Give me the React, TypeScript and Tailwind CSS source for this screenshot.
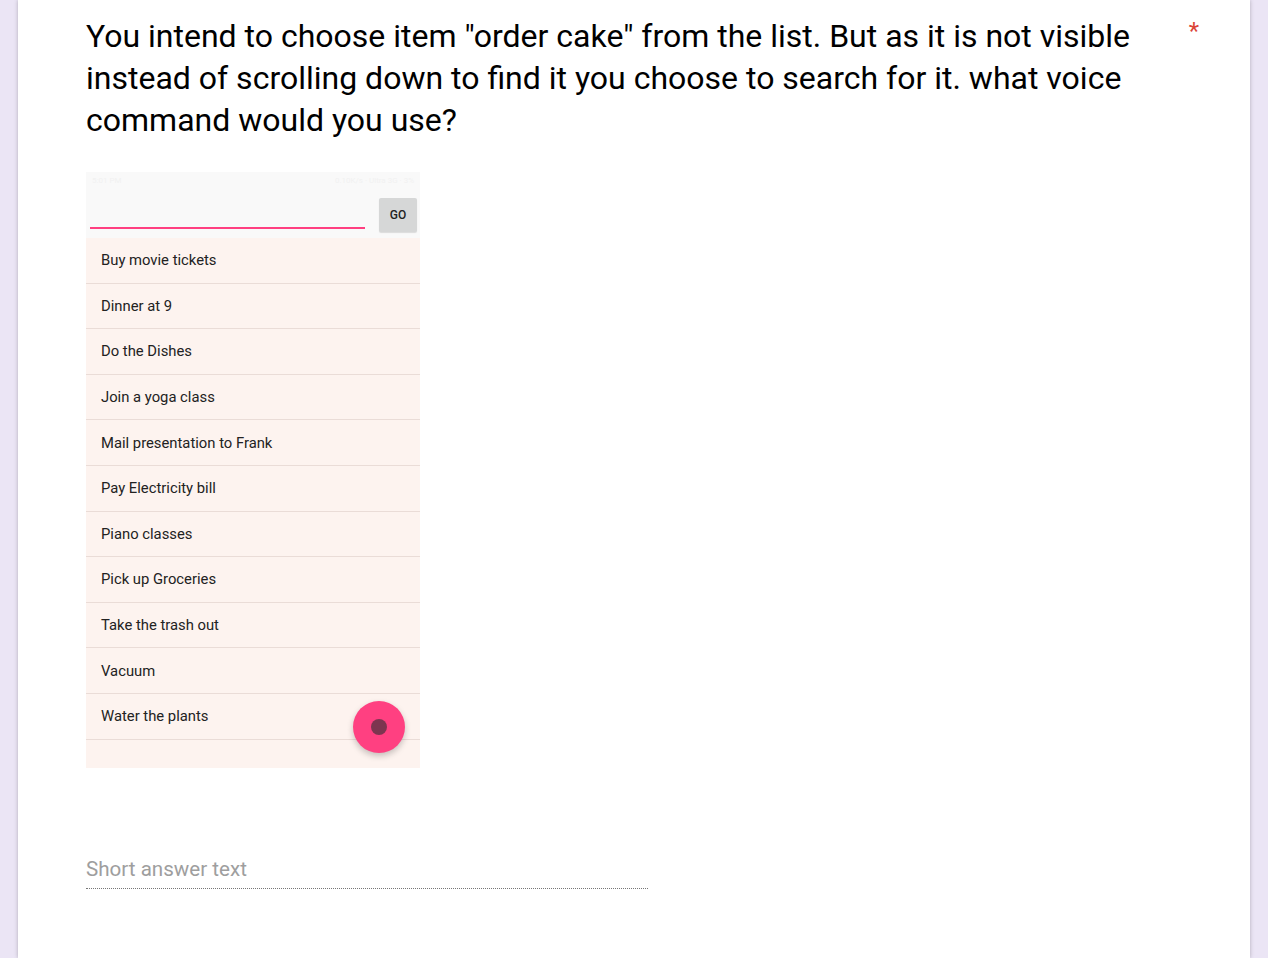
import React from 'react';

const items = [
  'Buy movie tickets',
  'Dinner at 9',
  'Do the Dishes',
  'Join a yoga class',
  'Mail presentation to Frank',
  'Pay Electricity bill',
  'Piano classes',
  'Pick up Groceries',
  'Take the trash out',
  'Vacuum',
  'Water the plants',
];

const PhoneShot: React.FC = () => (
  <div className="relative w-[334px] bg-[#fdf3ef] font-['Roboto',sans-serif]">
    {/* status bar */}
    <div className="h-[18px] bg-[#f9f9f9] flex items-center justify-between px-[6px] text-[8px] text-[#f1f1f1]">
      <span>5:01 PM</span>
      <span>0.10K/s · Ultra 3G · 3%</span>
    </div>
    {/* search row */}
    <div className="h-[48px] bg-[#f9f9f9] flex items-start pl-[4px] pr-[3px]">
      <div className="w-[275px] h-[2px] bg-[#ff4081] mt-[37px]" />
      <div className="ml-auto mt-[8px] w-[38px] h-[34px] rounded-[2px] bg-[#d6d7d7] shadow-[0_1px_1px_rgba(0,0,0,0.12)] flex items-center justify-center text-[12px] font-medium text-[#222]">
        GO
      </div>
    </div>
    {/* list */}
    <div>
      {items.map((item) => (
        <div
          key={item}
          className="h-[45.6px] border-b border-[#eadcd7] flex items-center pl-[15px] text-[14.8px] text-[#222]"
        >
          {item}
        </div>
      ))}
    </div>
    <div className="h-[28px]" />
    {/* FAB */}
    <div className="absolute left-[267px] top-[529px] w-[52px] h-[52px] rounded-full bg-[#ff4081] shadow-[0_3px_6px_rgba(0,0,0,0.22)] flex items-center justify-center">
      <div className="w-[16px] h-[16px] rounded-full bg-[#7d3550]" />
    </div>
  </div>
);

export default function App() {
  return (
    <div className="min-h-[958px] bg-[#ebe5f5] flex font-['Roboto',sans-serif]">
      <div className="ml-[18px] w-[1232px] min-h-[958px] bg-white shadow-[0_0_4px_rgba(0,0,0,0.25)] pl-[68px] pr-[18px] pt-[15px]">
        <div className="flex items-start">
          <h1 className="w-[1070px] text-[32px] leading-[42px] text-black font-normal">
            You intend to choose item "order cake" from the list. But as it is not visible instead of scrolling down to find it you choose to search for it. what voice command would you use?
          </h1>
          <span className="ml-auto mr-[33px] text-[#db4437] text-[24px] leading-[32px]">*</span>
        </div>
        <div className="mt-[31px]">
          <PhoneShot />
        </div>
        <div className="mt-[87px] w-[562px] border-b border-dotted border-[#777] pb-[5px] text-[20.6px] leading-[28px] text-[#9e9e9e]">
          Short answer text
        </div>
      </div>
    </div>
  );
}
